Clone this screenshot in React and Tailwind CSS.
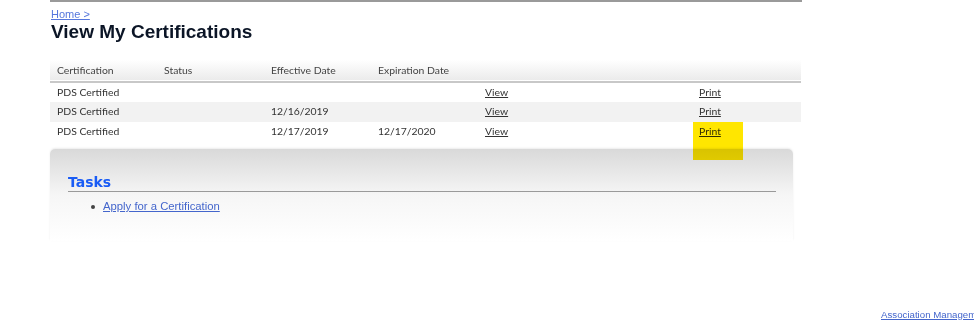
const rows = [
  { name: 'PDS Certified', effective: '', expiration: '', stripe: false },
  { name: 'PDS Certified', effective: '12/16/2019', expiration: '', stripe: true },
  { name: 'PDS Certified', effective: '12/17/2019', expiration: '12/17/2020', stripe: false },
];

const cellFont = { fontFamily: '"Segoe UI", Lato, "Open Sans", sans-serif' };

export default function App() {
  return (
    <div className="relative w-[974px] h-[329px] bg-white overflow-hidden" style={{ fontFamily: '"Liberation Sans", Arial, sans-serif' }}>
      <div className="ml-[50px] w-[752px] border-t-2 border-[#9a9a9a]" />

      <div className="ml-[51px] mt-[6px] text-[11px] leading-[13px]">
        <a href="#" className="text-[#5577dd] underline">Home &gt;</a>
      </div>
      <h1 className="ml-[51px] mt-[1px] text-[19px] leading-[20px] font-bold text-[#0b1526]">View My Certifications</h1>

      {/* Certifications table */}
      <table className="ml-[50px] mt-[18px] w-[751px] border-collapse text-[10.4px] text-[#333]" style={cellFont}>
        <thead>
          <tr className="h-[22px] bg-gradient-to-b from-white to-[#ebebeb] border-b-2 border-[#c8c8c8] text-[#444]">
            <th className="w-[107px] pl-[7px] text-left font-normal">Certification</th>
            <th className="w-[107px] pl-[7px] text-left font-normal">Status</th>
            <th className="w-[107px] pl-[7px] text-left font-normal">Effective Date</th>
            <th className="w-[107px] pl-[7px] text-left font-normal">Expiration Date</th>
            <th className="w-[214px] pl-[7px] text-left font-normal"></th>
            <th className="pl-[7px] text-left font-normal"></th>
          </tr>
        </thead>
        <tbody>
          {rows.map((r, i) => (
            <tr key={i} className={r.stripe ? 'h-[20px] bg-[#f2f2f2]' : 'h-[20px] bg-white'}>
              <td className="pl-[7px]">{r.name}</td>
              <td className="pl-[7px]"></td>
              <td className="pl-[7px]">{r.effective}</td>
              <td className="pl-[7px]">{r.expiration}</td>
              <td className="pl-[7px]"><a href="#" className="text-[#333] underline">View</a></td>
              <td className="pl-[7px]"><a href="#" className="text-[#333] underline">Print</a></td>
            </tr>
          ))}
        </tbody>
      </table>

      {/* Tasks panel */}
      <div className="ml-[50px] mt-[7px] w-[743px] h-[92px] rounded-t-[5px] bg-gradient-to-b from-[#d9d9d9] via-[#f6f6f6] to-white shadow-[0_-1px_2px_rgba(0,0,0,0.08)]">
        <div className="ml-[18px] mr-[17px] pt-[26px]">
          <h2 className="text-[14px] leading-[15px] font-bold text-[#1a5cf5] pb-[1px] border-b border-[#9a9a9a]" style={{ fontFamily: '"DejaVu Sans", Verdana, sans-serif' }}>Tasks</h2>
          <ul className="mt-[7px] text-[11.3px] leading-[15px] text-[#333]">
            <li className="flex items-center ml-[23px]">
              <span className="w-[4px] h-[4px] rounded-full bg-[#444]" />
              <a href="#" className="ml-[8px] text-[#4466cc] underline">Apply for a Certification</a>
            </li>
          </ul>
        </div>
      </div>

      {/* highlight over the Print link */}
      <div className="absolute left-[693px] top-[122px] w-[50px] h-[38px] bg-[#ffe600] mix-blend-multiply" />

      <a href="#" className="absolute left-[881px] top-[309px] whitespace-nowrap text-[9.7px] leading-[11px] text-[#4466cc] underline">Association Management</a>
    </div>
  );
}
